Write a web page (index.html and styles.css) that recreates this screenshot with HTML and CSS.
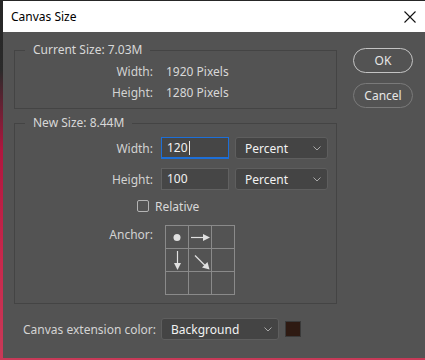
FILE: index.html
```html
<!DOCTYPE html>
<html>
<head>
<meta charset="utf-8">
<link rel="stylesheet" href="styles.css">
</head>
<body>
<div class="dialog">
  <div class="titlebar">
    <span class="title">Canvas Size</span>
    <svg class="close" width="12" height="12" viewBox="0 0 12 12"><path d="M0.5 0.5 L11.5 11.5 M11.5 0.5 L0.5 11.5" stroke="#111" stroke-width="1.1" fill="none"/></svg>
  </div>
  <div class="content">
    <div class="main">
      <fieldset class="group g1">
        <legend>Current Size: 7.03M</legend>
        <div class="info-grid">
          <span class="lbl">Width:</span><span class="val">1920 Pixels</span>
          <span class="lbl">Height:</span><span class="val">1280 Pixels</span>
        </div>
      </fieldset>
      <fieldset class="group g2">
        <legend>New Size: 8.44M</legend>
        <div class="form-grid">
          <span class="lbl">Width:</span>
          <div class="ctrls">
            <div class="input focus">120<span class="caret"></span></div>
            <div class="select unit">Percent<svg class="chev" width="8" height="5" viewBox="0 0 8 5"><path d="M0.5 0.5 L4 4 L7.5 0.5" stroke="#a8a8a8" fill="none"/></svg></div>
          </div>
          <span class="lbl">Height:</span>
          <div class="ctrls">
            <div class="input">100</div>
            <div class="select unit">Percent<svg class="chev" width="8" height="5" viewBox="0 0 8 5"><path d="M0.5 0.5 L4 4 L7.5 0.5" stroke="#a8a8a8" fill="none"/></svg></div>
          </div>
        </div>
        <div class="check-row"><span class="box"></span><span class="check-lbl">Relative</span></div>
        <div class="anchor-row">
          <span class="lbl anchor-lbl">Anchor:</span>
          <svg class="anchor" width="70" height="70" viewBox="0 0 70 70">
            <g stroke="#8a8a8a" stroke-width="1" fill="none">
              <rect x="0.5" y="0.5" width="69" height="69"/>
              <path d="M23.5 0 V70 M46.5 0 V70 M0 23.5 H70 M0 46.5 H70"/>
            </g>
            <circle cx="12" cy="12.5" r="3.5" fill="#e0e0e0"/>
            <path d="M26 12.5 H39" stroke="#e0e0e0" stroke-width="1.2"/>
            <path d="M38 9 L45 12.5 L38 16 Z" fill="#e0e0e0"/>
            <path d="M12.5 26 V39" stroke="#e0e0e0" stroke-width="1.2"/>
            <path d="M9 38 L12.5 45 L16 38 Z" fill="#e0e0e0"/>
            <path d="M30 30.5 L40 40.5" stroke="#e0e0e0" stroke-width="1.2"/>
            <path d="M37 42.5 L44.5 44.5 L42.5 37 Z" fill="#e0e0e0"/>
          </svg>
        </div>
      </fieldset>
      <div class="ext-row">
        <span class="ext-lbl">Canvas extension color:</span>
        <div class="select ext">Background<svg class="chev" width="8" height="5" viewBox="0 0 8 5"><path d="M0.5 0.5 L4 4 L7.5 0.5" stroke="#a8a8a8" fill="none"/></svg></div>
        <span class="swatch"></span>
      </div>
    </div>
    <div class="buttons">
      <div class="btn ok">OK</div>
      <div class="btn">Cancel</div>
    </div>
  </div>
</div>
</body>
</html>
```
FILE: styles.css
```css
html, body {
  margin: 0;
  padding: 0;
}
body {
  width: 425px;
  height: 360px;
  overflow: hidden;
  background: linear-gradient(to bottom, #262626 0px, #2a2a2a 70px, #b0163e 150px, #c8284c 260px, #c83a58 360px);
  font-family: "Noto Sans", "Open Sans", sans-serif;
  font-size: 12px;
}
.dialog {
  margin: 1px 0 0 3px;
  height: 357px;
  background: #535353;
  display: flex;
  flex-direction: column;
}
.titlebar {
  height: 31px;
  flex: none;
  background: #ffffff;
  display: flex;
  align-items: center;
  justify-content: space-between;
  padding: 0 9px 0 8px;
}
.title {
  color: #000;
  font-size: 12px;
}
.close {
  display: block;
}
.content {
  display: flex;
}
.main {
  padding: 11px 0 0 11px;
  width: 323px;
}
.group {
  border: 1px solid #444444;
  margin: 0;
  padding: 0;
  min-width: 0;
}
.group legend {
  color: #d8d8d8;
  font-size: 12px;
  line-height: 14px;
  padding: 0 8px;
  margin-left: 10px;
}
.g2 {
  margin-top: 7px;
}
.lbl {
  color: #d2d2d2;
  text-align: right;
}
.info-grid {
  display: grid;
  grid-template-columns: 138px auto;
  column-gap: 13px;
  grid-auto-rows: 21px;
  align-items: center;
  padding: 4px 0 5px;
}
.val {
  color: #d8d8d8;
}
.form-grid {
  display: grid;
  grid-template-columns: 138px auto;
  column-gap: 8px;
  row-gap: 9px;
  align-items: center;
  padding-top: 7px;
}
.ctrls {
  display: flex;
  gap: 6px;
  align-items: center;
}
.input {
  box-sizing: border-box;
  width: 68px;
  height: 22px;
  background: #464646;
  border: 1px solid #616161;
  color: #f2f2f2;
  font-size: 12px;
  line-height: 20px;
  padding-left: 5px;
  display: flex;
  align-items: center;
}
.input.focus {
  border-color: #1d6fd8;
  border-bottom-width: 2px;
}
.caret {
  display: inline-block;
  width: 1px;
  height: 14px;
  background: #e8e8e8;
  margin-left: 1px;
}
.select {
  box-sizing: border-box;
  height: 22px;
  background: #444444;
  border: 1px solid #5e5e5e;
  border-radius: 3px;
  color: #f2f2f2;
  font-size: 12px;
  display: flex;
  align-items: center;
  justify-content: space-between;
  padding: 0 6px 0 9px;
}
.select.unit {
  width: 93px;
}
.chev {
  display: block;
}
.check-row {
  display: flex;
  align-items: center;
  margin: 8px 0 0 122px;
  height: 16px;
}
.box {
  box-sizing: border-box;
  width: 12px;
  height: 12px;
  border: 1px solid #b4b4b4;
  border-radius: 2px;
}
.check-lbl {
  color: #d8d8d8;
  margin-left: 6px;
}
.anchor-row {
  display: grid;
  grid-template-columns: 138px auto;
  column-gap: 12px;
  margin-top: 11px;
  padding-bottom: 8px;
}
.anchor-lbl {
  margin-top: 2px;
  line-height: 16px;
}
.anchor {
  display: block;
}
.ext-row {
  display: grid;
  grid-template-columns: 132px 118px 16px;
  column-gap: 6px;
  align-items: center;
  margin-top: 14px;
  padding-left: 9px;
}
.ext-lbl {
  color: #d4d4d4;
  white-space: nowrap;
}
.select.ext {
  width: 118px;
}
.swatch {
  width: 16px;
  height: 16px;
  background: #2e1a12;
  box-sizing: border-box;
  border: 1px solid #3a3a3a;
}
.buttons {
  margin-left: 16px;
  padding-top: 16px;
  display: flex;
  flex-direction: column;
  gap: 10px;
}
.btn {
  box-sizing: border-box;
  width: 60px;
  height: 25px;
  border: 1px solid #7a7a7a;
  border-radius: 13px;
  color: #e6e6e6;
  font-size: 12px;
  display: flex;
  align-items: center;
  justify-content: center;
}
.btn.ok {
  border: 1.5px solid #c4c4c4;
}
```
